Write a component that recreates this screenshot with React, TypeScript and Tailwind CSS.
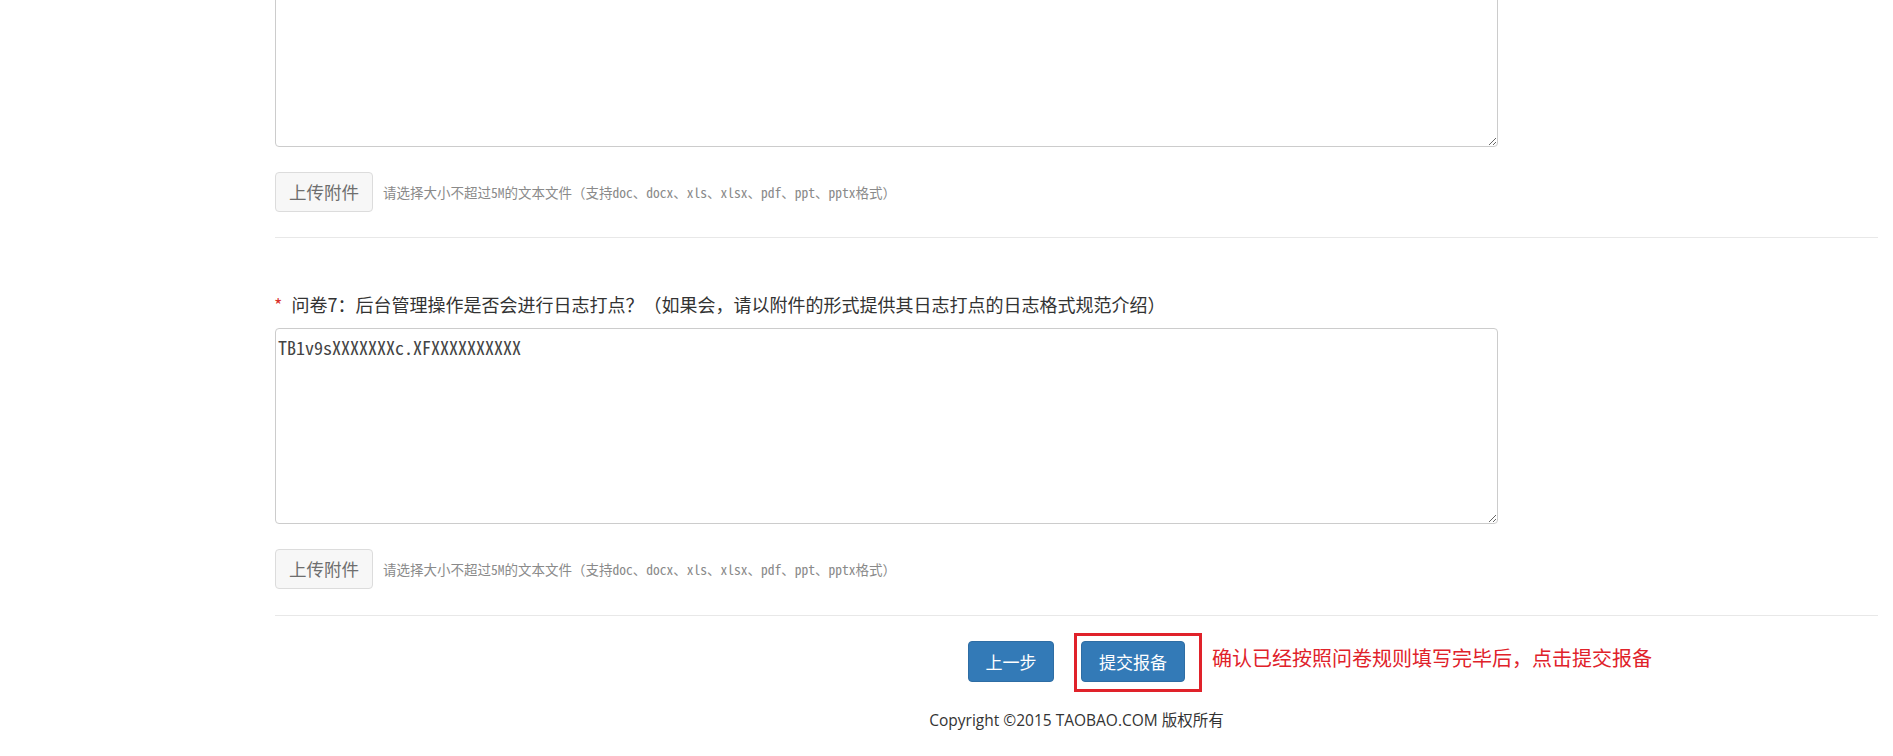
import React from "react";

const CJK = '"Noto Sans CJK SC", "Noto Sans", sans-serif';
const MONO = '"Noto Sans Mono CJK SC", "Liberation Mono", "Noto Sans CJK SC", monospace';

const HINT = "请选择大小不超过5M的文本文件（支持doc、docx、xls、xlsx、pdf、ppt、pptx格式）";

function UploadRow() {
  return (
    <div className="flex items-center gap-[10px]">
      <button
        className="h-[40px] w-[98px] rounded-[4px] border border-[#dcdcdc] bg-[#f7f7f7] text-[17.5px] text-[#6e6e6e]"
        style={{ fontFamily: CJK }}
      >
        上传附件
      </button>
      <span className="text-[13.5px] text-[#8a8a8a]" style={{ fontFamily: MONO }}>
        {HINT}
      </span>
    </div>
  );
}

export default function App() {
  return (
    <div className="min-h-screen overflow-hidden bg-white" style={{ fontFamily: CJK }}>
      <div className="ml-[275px] mr-[15px] mt-[-49px]">
        <textarea
          className="block h-[196px] w-[1223px] rounded-[4px] border border-[#cccccc] bg-white outline-none"
          defaultValue=""
        />
        <div className="mt-[25px]">
          <UploadRow />
        </div>
        <div className="mt-[25px] border-t border-[#e8e8e8]" />

        <div className="mt-[54px] flex h-[24px] items-center text-[18px] leading-[24px] text-[#333]">
          <span className="ml-[-1px] mr-[9px] text-[#d9312b]">*</span>
          <span>问卷7：后台管理操作是否会进行日志打点？（如果会，请以附件的形式提供其日志打点的日志格式规范介绍）</span>
        </div>
        <textarea
          className="mt-[12px] block h-[196px] w-[1223px] rounded-[4px] border border-[#cccccc] bg-white px-[2px] pt-[5px] text-[18px] leading-[27px] text-[#444] outline-none"
          style={{ fontFamily: MONO }}
          defaultValue="TB1v9sXXXXXXXc.XFXXXXXXXXXX"
        />
        <div className="mt-[25px]">
          <UploadRow />
        </div>
        <div className="mt-[26px] border-t border-[#e8e8e8]" />

        <div className="mt-[25px] flex justify-center gap-[27px]">
          <button className="h-[41px] w-[86px] rounded-[4px] border border-[#2e6da4] bg-[#337ab7] text-[17px] text-white">
            上一步
          </button>
          <div className="relative">
            <button className="h-[41px] w-[104px] rounded-[4px] border border-[#2e6da4] bg-[#337ab7] text-[17px] text-white">
              提交报备
            </button>
            <div className="pointer-events-none absolute left-[-7px] top-[-8px] h-[59px] w-[128px] border-[3px] border-[#e0222a]" />
            <div className="absolute left-[131px] top-[3px] whitespace-nowrap text-[20px] leading-[28px] text-[#e0222a]">
              确认已经按照问卷规则填写完毕后，点击提交报备
            </div>
          </div>
        </div>

        <div
          className="mt-[28px] text-center text-[15.5px] leading-[20px] text-[#333]"
          style={{ fontFamily: '"Open Sans", "Noto Sans CJK SC", sans-serif' }}
        >
          Copyright ©2015 TAOBAO.COM 版权所有
        </div>
      </div>
    </div>
  );
}
